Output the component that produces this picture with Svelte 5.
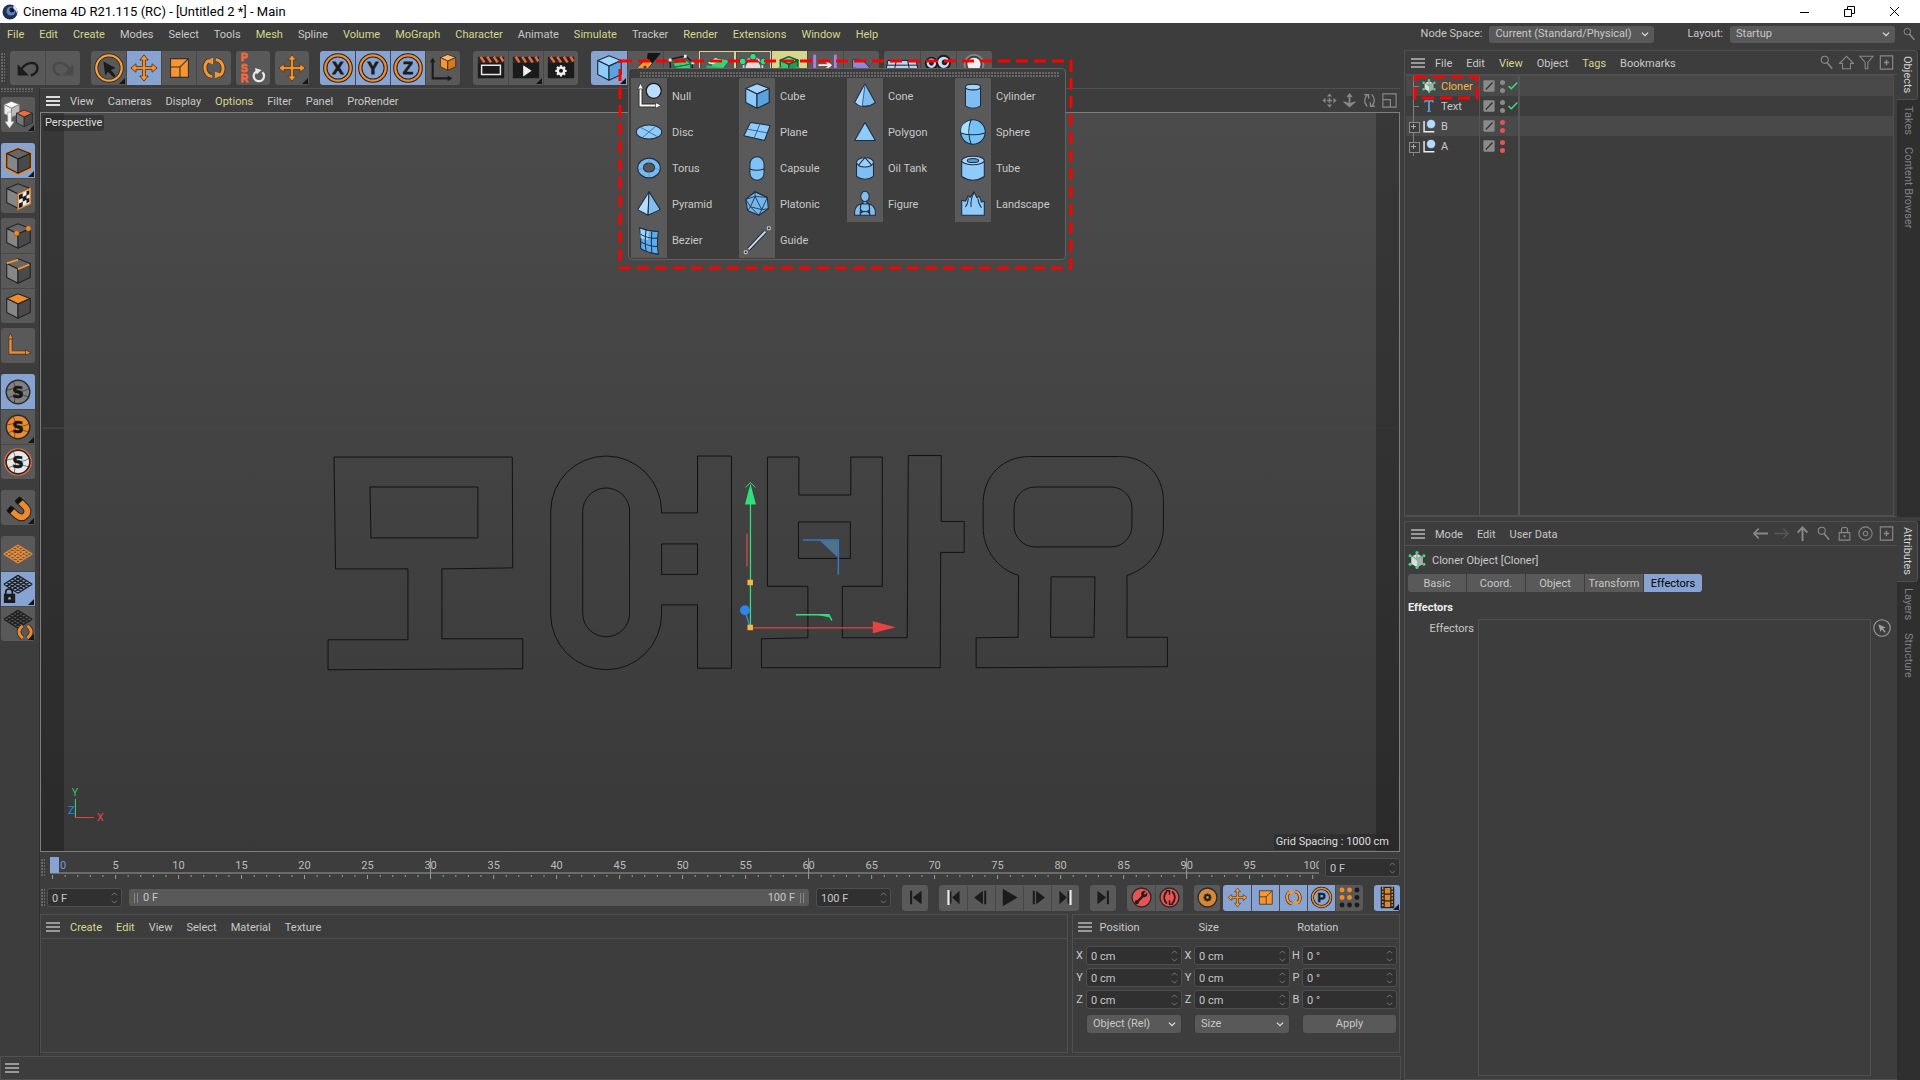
<script lang="ts">
  type MenuItem = { label: string; hot?: boolean };
  type Tool = {
    icon: string;
    label: string;
    active?: boolean;
    more?: boolean;
    tone?: string;
  };

  const menu = (text: string): MenuItem[] =>
    text.split(",").map((t) => ({ label: t.replace("*", ""), hot: t.startsWith("*") }));

  const mainMenu = menu(
    "*File,*Edit,*Create,Modes,Select,Tools,*Mesh,Spline,*Volume,*MoGraph,*Character,Animate,*Simulate,Tracker,*Render,*Extensions,*Window,*Help"
  );
  const viewMenu = menu("View,Cameras,Display,*Options,Filter,Panel,ProRender");
  const materialMenu = menu("*Create,*Edit,View,Select,Material,Texture");
  const objectMenu = menu("File,Edit,*View,Object,*Tags,Bookmarks");
  const attrMenu = menu("Mode,Edit,User Data");

  const tool = (icon: string, label: string, flags = ""): Tool => ({
    icon,
    label,
    active: flags.includes("a"),
    more: flags.includes("m"),
    tone: flags.includes("y") ? "yellow" : flags.includes("o") ? "outlined" : "",
  });

  const topTools: Tool[][] = [
    [tool("undo", "Undo"), tool("redo", "Redo")],
    [
      tool("select", "Live Selection", "m"),
      tool("move", "Move", "a"),
      tool("scale", "Scale"),
      tool("rotate", "Rotate"),
    ],
    [tool("psr", "Reset PSR")],
    [tool("move", "Last Tool", "m")],
    [
      tool("axisX", "X-Axis", "a"),
      tool("axisY", "Y-Axis", "a"),
      tool("axisZ", "Z-Axis", "a"),
      tool("coords", "Coordinate System"),
    ],
    [
      tool("clap", "Render View"),
      tool("clapPlay", "Render to Picture Viewer", "m"),
      tool("clapGear", "Render Settings"),
    ],
    [
      tool("cubeBlue", "Cube", "am"),
      tool("pen", "Pen"),
      tool("subdiv", "Subdivision Surface"),
      tool("extrude", "Extrude", "o"),
      tool("array", "Cloner", "o"),
      tool("volume", "Volume Builder", "y"),
      tool("field", "Field"),
      tool("bend", "Bend"),
    ],
    [tool("floor", "Floor"), tool("camera", "Camera"), tool("light", "Light")],
  ];

  const sideTools: Tool[][] = [
    [tool("convert", "Make Editable", "m")],
    [tool("model", "Model", "am"), tool("texture", "Texture")],
    [tool("points", "Points"), tool("edges", "Edges"), tool("polys", "Polygons")],
    [tool("axis", "Enable Axis")],
    [
      tool("soloOff", "Viewport Solo Off", "a"),
      tool("solo", "Viewport Solo Single", "m"),
      tool("soloAuto", "Viewport Solo Automatic"),
    ],
    [tool("magnet", "Enable Snap", "m")],
    [
      tool("plane", "Workplane"),
      tool("planeLock", "Locked Workplane", "am"),
      tool("planeSync", "Planar Workplane", "m"),
    ],
  ];

  const playTools: Tool[][] = [
    [tool("toStart", "Go to Start")],
    [
      tool("prevKey", "Go to Previous Key"),
      tool("prevFrame", "Go to Previous Frame"),
      tool("play", "Play Forwards"),
      tool("nextFrame", "Go to Next Frame"),
      tool("nextKey", "Go to Next Key"),
    ],
    [tool("toEnd", "Go to End")],
    [tool("record", "Record Active Objects"), tool("autokey", "Autokeying")],
    [tool("keyGear", "Keyframe Selection")],
    [
      tool("move", "Position", "a"),
      tool("scale", "Scale", "a"),
      tool("rotate", "Rotation", "a"),
      tool("param", "Parameter", "a"),
      tool("dots", "Point Level Animation"),
    ],
    [tool("film", "Film", "am")],
  ];

  const primitives = [
    ["Null", "Disc", "Torus", "Pyramid", "Bezier"],
    ["Cube", "Plane", "Capsule", "Platonic", "Guide"],
    ["Cone", "Polygon", "Oil Tank", "Figure"],
    ["Cylinder", "Sphere", "Tube", "Landscape"],
  ];

  const objects = [
    { name: "Cloner", icon: "cloner", on: true, selected: true, group: false },
    { name: "Text", icon: "textObj", on: true, selected: false, group: false },
    { name: "B", icon: "nullObj", on: false, selected: false, group: true },
    { name: "A", icon: "nullObj", on: false, selected: false, group: true },
  ];

  const coordRows = [
    ["X", "X", "H"],
    ["Y", "Y", "P"],
    ["Z", "Z", "B"],
  ];
  const coordValues = ["0 cm", "0 cm", "0 °"];
  const coordNames = ["Position", "Size", "Rotation"];

  const tabs = ["Basic", "Coord.", "Object", "Transform", "Effectors"];
  let activeTab = $state("Effectors");

  const frames = Array.from({ length: 101 }, (_, i) => i);
  const frameX = (f: number) => `${(0.2 + f * 0.993).toFixed(2)}%`;

  // icon drawing helpers, all on a 34 x 34 board
  const K = "#242424";
  const cube = (t: string, l: string, r: string, s = K, w = 1.2) =>
    `<g stroke="${s}" stroke-width="${w}" stroke-linejoin="round"><path d="M17 4 30 9 17 15 5 9Z" fill="${t}"/><path d="M5 9 17 15V30L5 24Z" fill="${l}"/><path d="M17 15 30 9V24L17 30Z" fill="${r}"/></g>`;
  const grayCube = cube("#666", "#868686", "#4a4a4a");
  const ring = (letter: string) =>
    `<circle cx="17" cy="17" r="13.5" fill="#87a3d1" stroke="#222" stroke-width="4.6"/><circle cx="17" cy="17" r="13.5" fill="none" stroke="#f08a2c" stroke-width="2.4"/><text x="17" y="23.4" text-anchor="middle" font-family="Liberation Sans, sans-serif" font-weight="bold" font-size="18" fill="#1b1b1b" stroke="#1b1b1b" stroke-width=".8">${letter}</text>`;
  const solo = (fill: string, edge: string) =>
    `<circle cx="17" cy="17" r="12.5" fill="${fill}" stroke="${edge}" stroke-width="1.6"/><path d="M5 15Q12 12 17 15T29 13M7 23Q17 18 28 22M12 6Q16 12 13 29" fill="none" stroke="#222" stroke-width=".6"/><text x="17" y="23" text-anchor="middle" font-family="DejaVu Sans, sans-serif" font-weight="bold" font-size="17" fill="#151515" stroke="#151515" stroke-width=".6">S</text>`;
  const mesh = (color: string, dy = 0) => {
    let d = "";
    for (let i = 0; i <= 5; i++) {
      d += `M${2 + i * 3} ${17 - i * 1.9 + dy}L${17 + i * 3} ${26.5 - i * 1.9 + dy}`;
      d += `M${2 + i * 3} ${17 + i * 1.9 + dy}L${17 + i * 3} ${7.5 + i * 1.9 + dy}`;
    }
    return `<path d="${d}" fill="none" stroke="${color}" stroke-width="1.4"/>`;
  };
  const clap = `<path d="M3 11h28v17H3Z" fill="#1b1b1b"/><path d="M3 5h28v6H3Z" fill="#262626"/><path d="M6 5l4 6M13 5l4 6M20 5l4 6M27 5l3 5" stroke="#f2683c" stroke-width="2.6"/>`;
  const gear = (x: number, y: number, c: string) => {
    let s = `<circle cx="${x}" cy="${y}" r="3.4" fill="none" stroke="${c}" stroke-width="2.6"/>`;
    for (let a = 0; a < 360; a += 45)
      s += `<path d="M${x - 1.2} ${y - 6}h2.4v3h-2.4Z" fill="${c}" transform="rotate(${a} ${x} ${y})"/>`;
    return s;
  };
  const movePath = "M17 3l4.500 5.500h-3v7h7v-3L31 17l-5.500 4.500v-3h-7v7h3L17 31l-4.500-5.500h3v-7h-7v3L3 17l5.500-4.500v3h7v-7h-3Z";
  const gb = 'stroke="#1e2d3c" stroke-width="1.1" stroke-linejoin="round"';

  const icons: Record<string, string> = {
    undo: `<path d="M9 21C12 11 27 8 27 17q0 6-7 8" fill="none" stroke="#1c1c1c" stroke-width="2.6"/><path d="M6 13v12h12Z" fill="#1c1c1c"/>`,
    redo: `<path d="M25 21C22 11 7 8 7 17q0 6 7 8" fill="none" stroke="#4a4a4a" stroke-width="2.6"/><path d="M28 13v12H16Z" fill="#4a4a4a"/>`,
    select: `<circle cx="17" cy="17" r="13.5" fill="none" stroke="#222" stroke-width="4"/><circle cx="17" cy="17" r="13.5" fill="none" stroke="#f7a03c" stroke-width="2.4"/><path d="M11 10l13 7-5 2 5 6-2 2-6-6-3 4Z" fill="#1b1b1b"/>`,
    move: `<path d="${movePath}" fill="#f7952f" stroke="#5b3a1a" stroke-width="1"/>`,
    scale: `<path d="M8 7h19v20H8Z" fill="#f7952f" stroke="#333" stroke-width="1.2"/><path d="M8 16h10v11M18 16l9-9" fill="none" stroke="#333" stroke-width="1.2"/>`,
    rotate: `<g fill="none" stroke="#333" stroke-width="5"><path d="M15 26A9 9.500 0 0 1 11 9M19 8a9 9.500 0 0 1 4 17"/></g><g fill="none" stroke="#f7952f" stroke-width="3.2"><path d="M15 26A9 9.500 0 0 1 11 9M19 8a9 9.500 0 0 1 4 17"/></g><path d="M7 10l9-4v7ZM27 24l-9 4v-7Z" fill="#f7952f"/>`,
    psr: `<g font-family="Liberation Sans, sans-serif" font-weight="bold" font-size="11" fill="#f2683c" stroke="#f2683c" stroke-width=".8"><text x="4" y="10">P</text><text x="4" y="21">S</text><text x="4" y="32">R</text></g><path d="M21 20.500a5.500 5.500 0 1 0 6 1" fill="none" stroke="#e8e8e8" stroke-width="2.4"/><path d="M19 17l7 2-5 5Z" fill="#e8e8e8"/>`,
    axisX: ring("X"),
    axisY: ring("Y"),
    axisZ: ring("Z"),
    coords: `<path d="M6 10v18h17" fill="none" stroke="#1b1b1b" stroke-width="2.200"/><path d="M6 6l3 5H3ZM27 28l-5 3v-6Z" fill="#1b1b1b"/><g transform="translate(11 0) scale(.65)">${cube("#ffb45e", "#f7952f", "#d9781c")}</g>`,
    clap: clap + `<path d="M7 14h20v10H7Z" fill="none" stroke="#e8e8e8" stroke-width="1.600"/>`,
    clapPlay: clap + `<path d="M14 14l9 6-9 6Z" fill="#f0f0f0"/>`,
    clapGear: clap + gear(17, 20, "#f0f0f0"),
    cubeBlue: cube("#a5d4ff", "#8ecbfb", "#5aa3e0", "#1e2d3c"),
    pen: `<path d="M20 1h14l-9 11-6-5Z" fill="#151515"/><path d="M9 16l10-9 6 5-12 14-7 4Z" fill="#f7952f" stroke="#333"/><path d="M8 27l8-9" stroke="#333"/><circle cx="17" cy="16" r="1.500" fill="#333"/>`,
    subdiv: `<path d="M5 8l17-4 7 7v14l-22 4Z" fill="none" stroke="#1b1b1b" stroke-width="1.5"/><path d="M8 12l15-3 4 4-16 3ZM11 16l16-3v12l-14 4Z" fill="#35d079" stroke="#173"/><path d="M4 7h3v3H4ZM20 3h3v3h-3ZM28 10h3v3h-3Z" fill="#eee"/>`,
    extrude: `<path d="M6 12l9-6 14 3-5 8Z" fill="#e9fff2" stroke="#173"/><path d="M12 13l12-5 5 2-6 7-13 2Z" fill="#35d079"/><path d="M6 14l17 3v13L6 26Z" fill="#2bb568"/>`,
    array: `<circle cx="17" cy="17" r="8" fill="#ddd"/><path d="M17 5l-10 6v12l10 6 10-6V11Z" fill="none" stroke="#ccc" stroke-width="2"/><g fill="#3ddc84" stroke="#154"><circle cx="17" cy="5" r="3.500"/><circle cx="6" cy="10" r="3.500"/><circle cx="28" cy="10" r="3.500"/><circle cx="6" cy="23" r="3.500"/><circle cx="28" cy="23" r="3.500"/></g>`,
    volume: `<g transform="translate(4 2) scale(.75)">${cube("#5fe89b", "#35c973", "#219b54", "#0d5a2d", 2)}</g><path d="M5 17l5-2v12l-5-3ZM29 17l-5-2v12l5-3Z" fill="#2bb568"/>`,
    field: `<path d="M6 3v28M28 3v28" stroke="#b77be6" stroke-width="3"/><path d="M10 14h12M18 10l5 4-5 4" fill="none" stroke="#eee" stroke-width="2"/>`,
    bend: `<path d="M8 8q12-3 20 12l-4 9q-8-13-16-12Z" fill="#8f88d8" stroke="#333"/>`,
    floor: `<path d="M2 9h30l3 15H-1Z" fill="#b8d4f6" stroke="#1b1b1b"/><path d="M11 9L8 24M23 9l3 15M1 14h32" stroke="#1b1b1b" fill="none"/>`,
    camera: `<circle cx="10" cy="12" r="6" fill="#c8e0fa" stroke="#1b1b1b" stroke-width="2"/><circle cx="23" cy="11" r="7" fill="#c8e0fa" stroke="#1b1b1b" stroke-width="2"/><circle cx="10" cy="12" r="2.500" fill="#222"/><circle cx="24" cy="11" r="3" fill="#222"/>`,
    light: `<circle cx="17" cy="13" r="11" fill="#888"/><circle cx="17" cy="13" r="8" fill="#eee" stroke="#444" stroke-width="2"/>`,
    convert: `<g transform="translate(-1 0) scale(.65)">${cube("#fff", "#eee", "#bbb", "#777")}</g><g transform="translate(12 9) scale(.68)">${cube("#f2683c", "#777", "#484848")}</g><path d="M6 14h4v10h3l-5 7-5-7h3Z" fill="#f4f4f4" stroke="#888" stroke-width=".5"/>`,
    model: `<path d="M17 3.500 30.500 9v16L17 31 4 25V9Z" fill="none" stroke="#f08a2c" stroke-width="2.600"/>` + grayCube,
    texture: `${grayCube}<path d="M17 15l13-6v16l-13 6Z" fill="#eee" stroke="#f08a2c" stroke-width="1.400"/><path d="M18 16l4-2v5l-4 2ZM26 12l3-1v4l-3 2ZM22 18l4-2v5l-4 2ZM18 25l4-2v5l-4 2ZM26 20l3-1v4l-3 2Z" fill="#1b1b1b"/>`,
    points: `${grayCube}<g fill="#f08a2c" stroke="#8a4a10" stroke-width=".6"><circle cx="15.500" cy="14" r="2.800"/><circle cx="28" cy="9" r="2.800"/></g>`,
    edges: `${grayCube}<path d="M5 9l12-4M17 15l12-5" stroke="#f7952f" stroke-width="2"/>`,
    polys: cube("#f08a2c", "#868686", "#4a4a4a"),
    axis: `<path d="M9 8v16h17" fill="none" stroke="#333" stroke-width="4"/><path d="M9 8v16h17" fill="none" stroke="#f08a2c" stroke-width="2.600"/><path d="M9 3.500l2.600 6H6.400ZM31 24l-6 2.800v-5.600Z" fill="#f08a2c" stroke="#333" stroke-width=".8"/>`,
    soloOff: solo("#808080", "#2a2a2a"),
    solo: solo("#f08a2c", "#2a2a2a"),
    soloAuto: `<circle cx="17" cy="17" r="14" fill="#2a2a2a" stroke="#f2683c" stroke-width="1.400"/>` + solo("#e8e8e8", "#2a2a2a"),
    magnet: `<g fill="none"><path d="M8 18l8 7q5 4 9 0t0-9l-8-8" stroke="#222" stroke-width="8"/><path d="M8 18l8 7q5 4 9 0t0-9l-8-8" stroke="#f08a2c" stroke-width="6"/><path d="M7 17l4 3.500M16 7l3.500 4" stroke="#111" stroke-width="7"/></g>`,
    plane: mesh("#f08a2c"),
    planeLock: mesh("#1e1e1e", -5) + `<path d="M4 23v-3q0-3 3.500-3t3.500 3v3" fill="none" stroke="#1b1b1b" stroke-width="1.800"/><path d="M2 22h12v10H2Z" fill="#1b1b1b"/><circle cx="8" cy="27" r="1.400" fill="#87a3d1"/>`,
    planeSync: mesh("#1e1e1e", -5) + `<path d="M22 19q-8 6 0 13M27 19q8 6 0 13" fill="none" stroke="#333" stroke-width="5"/><path d="M22 19q-8 6 0 13M27 19q8 6 0 13" fill="none" stroke="#f08a2c" stroke-width="3"/>`,
    toStart: `<path d="M9 7h3v20H9ZM26 7v20L13 17Z" fill="#1b1b1b"/>`,
    toEnd: `<path d="M22 7h3v20h-3ZM8 7v20l13-10Z" fill="#1b1b1b"/>`,
    prevKey: `<path d="M8 6h3v22H8Z" fill="#eee"/><path d="M12 8h2v18h-2ZM26 7v20L15 17Z" fill="#1b1b1b"/>`,
    nextKey: `<path d="M23 6h3v22h-3Z" fill="#eee"/><path d="M20 8h2v18h-2ZM8 7v20l11-10Z" fill="#1b1b1b"/>`,
    prevFrame: `<path d="M19 7v20L6 17ZM21 7h3v20h-3Z" fill="#1b1b1b"/>`,
    nextFrame: `<path d="M15 7v20l13-10ZM10 7h3v20h-3Z" fill="#1b1b1b"/>`,
    play: `<path d="M7 4v26l22-13Z" fill="#1b1b1b"/>`,
    record: `<circle cx="17" cy="17" r="14" fill="#e85252" stroke="#2a2a2a" stroke-width="2"/><path d="M10 24l10-10" stroke="#1b1b1b" stroke-width="3.500"/><circle cx="21" cy="12" r="4.500" fill="#1b1b1b"/><circle cx="10" cy="24" r="3" fill="#1b1b1b"/><path d="M21 12l5-5" stroke="#e85252" stroke-width="2.500"/>`,
    autokey: `<circle cx="17" cy="17" r="14" fill="#e85252" stroke="#2a2a2a" stroke-width="2"/><path d="M13 8q-8 9 0 18M21 8q8 9 0 18" fill="none" stroke="#1b1b1b" stroke-width="2.600"/><path d="M12 7h5v6M22 27h-5v-6" fill="none" stroke="#1b1b1b" stroke-width="2"/>`,
    keyGear: `<circle cx="17" cy="17" r="14" fill="#d5873a" stroke="#2a2a2a" stroke-width="2"/>` + gear(17, 17, "#1b1b1b"),
    param: ring("P"),
    dots: [6, 17, 28]
      .map((y, r) => [6, 17, 28].map((x, c) => `<circle cx="${x}" cy="${y}" r="3.600" fill="${r < 2 && c < 2 ? "#f08a2c" : "#1b1b1b"}"/>`).join(""))
      .join(""),
    film: `<path d="M7 1h20v32H7Z" fill="#222"/><path d="M13 3h8v8h-8ZM13 13h8v8h-8ZM13 23h8v8h-8Z" fill="#d5873a"/><path d="M10 2v30M24 2v30" stroke="#d5873a" stroke-width="2.400" stroke-dasharray="3 2"/>`,

    Null: `<g fill="none" stroke="#222" stroke-width="4"><path d="M8 8v19h17"/></g><path d="M8 8v19h17" fill="none" stroke="#fff" stroke-width="2.200"/><path d="M8 3.500l3 6H5ZM30 27l-6 3v-6Z" fill="#fff" stroke="#222" stroke-width=".7"/><circle cx="22" cy="11.500" r="8" fill="#b9dcff" stroke="#1b1b1b" stroke-width="1.300"/>`,
    Disc: `<ellipse cx="17" cy="17" rx="13.500" ry="7.500" fill="#8ecbfb" ${gb}/><path d="M8 12l18 10M24 11l-14 12" stroke="#3a6f9c" fill="none"/>`,
    Torus: `<ellipse cx="17" cy="17" rx="12" ry="10.500" fill="#78b9f2" ${gb}/><ellipse cx="17" cy="16.500" rx="6" ry="4.800" fill="#555" ${gb}/><path d="M17 7v5M6 19l5-2M28 19l-5-2M17 27v-6" stroke="#5c98cf"/>`,
    Pyramid: `<path d="M17 4L5 23l11 6Z" fill="#b5dbff" ${gb}/><path d="M17 4l-1 25 13-6Z" fill="#80bdf0" ${gb}/>`,
    Bezier: `<path d="M7 4q10 4 20 4-2 12 0 24-11-1-19-6Q9 14 7 4Z" fill="#5aaef0" ${gb}/><path d="M8 5q5 2 9 3l-1 9q-4 0-8-2Z" fill="#9cd4ff"/><path d="M8 11q10 5 18 4M8 19q9 5 18 5M14 6q-2 12 0 23M20 8q-1 11 0 23" fill="none" ${gb}/>`,
    Cube: cube("#a5d4ff", "#8ecbfb", "#5aa3e0", "#1e2d3c"),
    Plane: `<path d="M10 7l21 3-6 16-22-5Z" fill="#8ecbfb" ${gb}/><path d="M20 8.500l-6 15M7 14l21 4" stroke="#2f5f8c"/>`,
    Capsule: `<rect x="9.500" y="5" width="15" height="25" rx="7.500" fill="#80c2f8" ${gb}/><path d="M9.500 18q7 3 15 0" fill="none" ${gb}/>`,
    Platonic: `<path d="M15 4l13 6 1 12-10 7-12-5-2-12Z" fill="#74b6ee" ${gb}/><path d="M15 4L5 12l5 8 12 3 6-13ZM15 9L10 20M15 9l13 1M15 9l7 14M15 4v5L5 12M10 20l-3 4M10 20l9 9 3-6 7-1" fill="none" stroke="#1e2d3c" stroke-width=".9"/>`,
    Guide: `<path d="M8 27L26 8" stroke="#222" stroke-width="4"/><path d="M8 27L26 8" stroke="#b9dcff" stroke-width="2.200"/><path d="M3.500 28.500h3v3h-3ZM28 3h3v3h-3Z" fill="#222" stroke="#ddd"/>`,
    Cone: `<path d="M17 4L6 24q11 8 22 0Z" fill="#80bdf0" ${gb}/><path d="M17 5L14 28Q10 27 7 24Z" fill="#a9d7ff"/><path d="M17 5l-3 23" stroke="#2f5f8c"/>`,
    Polygon: `<path d="M17 7l11 19H6Z" fill="#8ecbfb" ${gb}/>`,
    "Oil Tank": `<path d="M8 11v15q9 6 18 0V11l-9-6Z" fill="#80bdf0" stroke="none"/><path d="M8 12v14q9 6 18 0V12" fill="none" ${gb}/><ellipse cx="17" cy="11" rx="9" ry="5" fill="#9ad0fb" ${gb}/><path d="M17 6l-7 8M17 6l7 8" fill="none" ${gb}/>`,
    Figure: `<g fill="#80bdf0" ${gb}><path d="M13 17q-6 1-7 8v4h6v-4ZM21 17q6 1 7 8v4h-6v-4Z"/><path d="M13 17q4-2 8 0l1 5q-1 3-3 3h-4q-2 0-3-3Z"/><path d="M12 29q0-4 5-4t5 4Z"/><path d="M15 13h4v4h-4Z"/><ellipse cx="17" cy="9" rx="4.500" ry="5.500"/></g>`,
    Cylinder: `<path d="M9 7.500v20q8 5 16 0v-20" fill="#80bdf0" ${gb}/><ellipse cx="17" cy="7.500" rx="8" ry="3" fill="#a5d4ff" ${gb}/>`,
    Sphere: `<circle cx="17" cy="17" r="13" fill="#74c2f8" ${gb}/><path d="M14 5q-12 3-9 14h9Z" fill="#a5e2ff"/><path d="M15 4q-5 12 0 26M4 18q12 4 26 0" fill="none" ${gb}/>`,
    Tube: `<path d="M5 9v17q12 8 24 0V9" fill="#8ecbfb" ${gb}/><ellipse cx="17" cy="9" rx="12" ry="4.500" fill="#a5d4ff" ${gb}/><ellipse cx="17" cy="9" rx="6" ry="2.200" fill="#5c9bd2" ${gb}/>`,
    Landscape: `<path d="M5 29V13l4 1 3-6 2 2 4-6 3 6 3-1 2 6 3-1v15Z" fill="#8ecbfb" ${gb}/><path d="M12 10q0 6-3 10M18 5q-4 7-3 15M22 11q1 6 4 10" fill="none" ${gb}/>`,

    cloner: `<path d="M17 5l11 6v13l-11 7-11-7V11Z" fill="#ddd"/><path d="M17 16l11-6v14l-11 7Z" fill="#aaa"/><path d="M17 3v12l12-7M5 8l12 8M5 8v17l12 7M29 8v17" stroke="#333" stroke-width="1" fill="none"/><g fill="#3ddc84"><circle cx="17" cy="3" r="3"/><circle cx="4" cy="9" r="3"/><circle cx="30" cy="9" r="3"/><circle cx="17" cy="15" r="3"/><circle cx="4" cy="25" r="3"/><circle cx="30" cy="25" r="3"/><circle cx="17" cy="31" r="3"/></g>`,
    textObj: `<path d="M6 3h22v6h-2q0-3-4-3h-3v22q0 2 3 2v1H12v-1q3 0 3-2V6h-3q-4 0-4 3H6Z" fill="#6aa6e0"/>`,
    nullObj: `<path d="M5 5v26h25" fill="none" stroke="#eee" stroke-width="3.500"/><circle cx="22" cy="12" r="11" fill="#b4daff" stroke="#222"/>`,
    search: `<circle cx="13" cy="11" r="8" fill="none" stroke="currentColor" stroke-width="2.400"/><path d="M18 17l12 14" stroke="currentColor" stroke-width="3.500"/>`,
    home: `<path d="M17 3L1 19h7v12h18V19h7Z" fill="none" stroke="currentColor" stroke-width="2.400"/>`,
    filter: `<path d="M2 3h30L20 17v14h-6V17Z" fill="none" stroke="currentColor" stroke-width="2.400"/>`,
    plus: `<path d="M3 2h28v30H3Z" fill="none" stroke="currentColor" stroke-width="2.600"/><path d="M17 11v12M11 17h12" stroke="currentColor" stroke-width="3.500"/>`,
    back: `<path d="M34 17H3M13 6L2 17l11 11" fill="none" stroke="currentColor" stroke-width="4"/>`,
    forward: `<path d="M0 17h30M21 6l11 11-11 11" fill="none" stroke="currentColor" stroke-width="3"/>`,
    up: `<path d="M17 34V4M6 15L17 3l11 12" fill="none" stroke="currentColor" stroke-width="4.400"/>`,
    lock: `<path d="M5 15h24v17H5ZM10 15v-6q0-6 7-6t7 6v6" fill="none" stroke="currentColor" stroke-width="2.400"/><circle cx="17" cy="23" r="2.500" fill="currentColor"/>`,
    target: `<circle cx="17" cy="17" r="15" fill="none" stroke="currentColor" stroke-width="2.400"/><circle cx="17" cy="17" r="5" fill="none" stroke="currentColor" stroke-width="2.400"/>`,
    pick: `<circle cx="17" cy="17" r="15.5" fill="none" stroke="currentColor" stroke-width="2"/><path d="M10 10l14 6-5 2 5 6-2 2-5-6-3 4Z" fill="currentColor"/>`,
    pan: `<path d="M17 1l6 7H11ZM17 33l-6-7h12ZM1 17l7-6v12ZM33 17l-7 6V11Z" fill="currentColor"/><path d="M17 11v12M11 17h12" stroke="currentColor" stroke-width="3"/>`,
    dolly: `<path d="M17 0l7 9h-5v13h-4V9h-5Z" fill="currentColor"/><path d="M2 20l15 13 15-13-3-1-9 3h-6l-9-3Z" fill="currentColor"/>`,
    orbit: `<path d="M12 31Q0 17 12 4M22 3q12 14 0 27" fill="none" stroke="currentColor" stroke-width="3"/><path d="M5 4h10v9M29 30H19v-9" fill="none" stroke="currentColor" stroke-width="3"/>`,
    maximize: `<path d="M2 2h30v30H2ZM2 15h17v17M2 15" fill="none" stroke="currentColor" stroke-width="2.600"/>`,
    chevron: `<path d="M4 11l13 13 13-13" fill="none" stroke="currentColor" stroke-width="5.500"/>`,
    check: `<path d="M2 17l9 9L32 5" fill="none" stroke="#3ddc84" stroke-width="5"/>`,
    layer: `<rect x="1" y="1" width="32" height="32" rx="3" fill="#8a8a8a"/><path d="M8 27L27 7" stroke="#303030" stroke-width="3.500"/>`,
  };
</script>

{#snippet icon(name: string, kind = "")}
  <svg class="icon {kind}" viewBox="0 0 34 34" aria-hidden="true">{@html icons[name]}</svg>
{/snippet}

{#snippet menuItems(items: MenuItem[])}
  {#each items as item}
    <button class="menu-item" class:hot={item.hot}>{item.label}</button>
  {/each}
{/snippet}

{#snippet burger()}
  <button class="burger" aria-label="Panel menu"><i></i><i></i><i></i></button>
{/snippet}

{#snippet toolGroup(group: Tool[])}
  <div class="group">
    {#each group as t}
      <button class="tool {t.tone}" class:active={t.active} class:more={t.more} aria-label={t.label}>
        {@render icon(t.icon)}
      </button>
    {/each}
  </div>
{/snippet}

{#snippet field(value: string, label: string)}
  <div class="field">
    <input type="text" {value} aria-label={label} />
    <svg class="spin" viewBox="0 0 8 14" aria-hidden="true">
      <path d="M1 4l3-3 3 3M1 10l3 3 3-3" />
    </svg>
  </div>
{/snippet}

{#snippet dropdown(value: string, label: string)}
  <div class="dropdown">
    <select aria-label={label}><option>{value}</option></select>
    {@render icon("chevron", "chev")}
  </div>
{/snippet}

<div class="app">
  <header class="title">
    <svg class="logo" viewBox="0 0 16 16" aria-hidden="true">
      <circle cx="8" cy="8" r="7.500" fill="#20304f" />
      <circle cx="9" cy="7" r="4.500" fill="#5f83c9" />
      <circle cx="10" cy="6" r="2.500" fill="#14182b" />
      <path d="M12 1q4 3 3 9-1-4-4-6Z" fill="#dfe7f5" />
    </svg>
    <h1>Cinema 4D R21.115 (RC) - [Untitled 2 *] - Main</h1>
    <div class="window-buttons">
      <button aria-label="Minimize"><svg viewBox="0 0 11 11"><path d="M1 6.500h9" /></svg></button>
      <button aria-label="Restore"><svg viewBox="0 0 11 11"><path d="M.5 3.500h7v7h-7ZM3.500 3.500v-3h7v7h-3" /></svg></button>
      <button aria-label="Close"><svg viewBox="0 0 11 11"><path d="M1 1l9 9M10 1l-9 9" /></svg></button>
    </div>
  </header>

  <nav class="menubar">
    {@render menuItems(mainMenu)}
    <div class="layouts">
      <span>Node Space:</span>
      {@render dropdown("Current (Standard/Physical)", "Node Space")}
      <span class="layout-label">Layout:</span>
      {@render dropdown("Startup", "Layout")}
      {@render icon("search", "small")}
    </div>
  </nav>

  <div class="body">
    <main>
      <div class="toolbar">
        <div class="grip tall"></div>
        {#each topTools as group}
          {@render toolGroup(group)}
        {/each}

        <div class="popup">
          <div class="grip wide"></div>
          <div class="primitives">
            {#each primitives as column}
              <div class="prim-col">
                {#each column as name}
                  <button class="prim">
                    <span class="prim-icon">{@render icon(name)}</span>
                    <span class="caption">{name}</span>
                  </button>
                {/each}
              </div>
            {/each}
          </div>
        </div>
        <svg class="marker popup-marker" aria-hidden="true"><rect x="2" y="2" width="451" height="207" /></svg>
      </div>

      <div class="work">
        <div class="sidebar">
          <div class="grip wide"></div>
          {#each sideTools as group}
            {@render toolGroup(group)}
          {/each}
        </div>

        <div class="center">
          <div class="panel-head view-head">
            {@render burger()}
            {@render menuItems(viewMenu)}
            <div class="head-icons">
              {@render icon("pan")}
              {@render icon("dolly")}
              {@render icon("orbit")}
              {@render icon("maximize")}
            </div>
          </div>
          <div class="viewport">
            <svg class="scene" viewBox="41 113 1358 739" preserveAspectRatio="xMidYMid meet" aria-label="Perspective view">
              <path class="horizon" d="M41 428.500H1399" />
              <g class="outline">
                <path d="M333.500 457.500H512L512.500 568.500 441.500 569.500V639.500H522.500V669.500L327.500 670.500V640.500H407.500V569.500H335Z" />
                <path d="M369.500 487.500H477.500V538.500H370.500Z" />
                <path d="M661.500 513.500H697.500V456.500H731.500V669H697.500V605.500H661.500V615A55.500 55.500 0 0 1 550.500 615V512A55.500 55.500 0 0 1 661.500 512Z" />
                <rect x="582.500" y="488.500" width="47" height="149" rx="23.500" />
                <path d="M661.500 544.500H697.500V575H661.500Z" />
                <path d="M767.500 457.500H799V495.500H851V457.500H882.500V587H842.500V638.500H907.500L908.500 456H941.500V522H964.500V553H941L940.500 668.500H761.500V639.500L808 638.500V587H767.500Z" />
                <path d="M798.500 522.500H850.500V559H798.500Z" />
                <path d="M1019 576C998 570 983.500 550 983.500 528V502C984.500 476 1003 457 1030 457H1120C1147 457 1164 476 1164 502V528C1164 550 1148 570 1127.500 576V638H1168V667.500L976.500 668.500V638.500L1018.500 638Z" />
                <rect x="1014.500" y="487.500" width="118" height="60" rx="21" />
                <path d="M1051.500 577.500H1095.500L1094.500 638H1051Z" />
              </g>
              <path d="M747 534V567" stroke="#c74545" stroke-width="1.500" />
              <path d="M745 611L750 628" stroke="#3f7fd0" stroke-width="1.500" />
              <path d="M803 540.500H838.500V575.500M821 541L838 557" fill="none" stroke="#3577c8" stroke-width="1.500" />
              <path d="M822 541H838V557Z" fill="#517388" />
              <path d="M750.500 628V490" stroke="#2ee07a" stroke-width="1.300" />
              <path d="M750.500 484L756 505H745Z" fill="#2ee07a" />
              <path d="M745.500 488L750.500 483 755.500 488" fill="none" stroke="#2ee07a" />
              <path d="M796 615.500H829L832 621" fill="none" stroke="#2ee07a" stroke-width="1.500" />
              <path d="M814 615L829 618V615Z" fill="#2ee07a" />
              <path d="M750 628.500H874" stroke="#e64444" stroke-width="1.300" />
              <path d="M873 622L896 628 873 634Z" fill="#e64444" />
              <circle cx="745" cy="611" r="5" fill="#2e85e6" />
              <path d="M747.500 580.500H753V586H747.500ZM747.500 625.500H753V631H747.500Z" fill="#f5b83d" />
              <path d="M74.500 800V818" stroke="#3ddc84" />
              <path d="M74 818.500H93" stroke="#e64444" />
              <g class="axis-names">
                <text x="71" y="797" fill="#34c070">Y</text>
                <text x="67" y="815" fill="#2e85e6">Z</text>
                <text x="96" y="822" fill="#e64444">X</text>
              </g>
            </svg>
            <span class="view-name">Perspective</span>
            <span class="grid-info">Grid Spacing : 1000 cm</span>
          </div>

          <div class="timeline">
            <div class="grip tall"></div>
            <svg class="ruler" aria-hidden="true">
              <rect class="head" y="3" width="9" height="16" />
              {#each frames as f}
                <line x1={frameX(f)} x2={frameX(f)} y1={f % 30 === 0 && f ? 4 : 21} y2={f % 5 === 0 ? 25 : 23} />
                {#if f % 5 === 0 && f}
                  <text x={frameX(f)} y="15">{f}</text>
                {/if}
              {/each}
              <text class="zero" x="13" y="15">0</text>
              <line x1="0" x2="100%" y1="19" y2="19" />
            </svg>
            {@render field("0 F", "Current frame")}
          </div>

          <div class="playback">
            <div class="grip tall"></div>
            {@render field("0 F", "First frame")}
            <div class="range"><b></b><span>0 F</span><span class="range-end">100 F</span><b></b></div>
            {@render field("100 F", "Last frame")}
            <div class="play-tools">
              {#each playTools as group}
                {@render toolGroup(group)}
              {/each}
            </div>
          </div>

          <div class="bottom">
            <section class="materials">
              <div class="panel-head">
                {@render burger()}
                {@render menuItems(materialMenu)}
              </div>
            </section>
            <section class="coordinates">
              <div class="panel-head coord-head">
                {@render burger()}
                <span>Position</span>
                <span>Size</span>
                <span>Rotation</span>
              </div>
              <div class="coord-grid">
                {#each coordRows as row}
                  {#each row as axis, i}
                    <span>{axis}</span>
                    {@render field(coordValues[i], `${coordNames[i]} ${axis}`)}
                  {/each}
                {/each}
                <span></span>
                {@render dropdown("Object (Rel)", "Coordinate mode")}
                <span></span>
                {@render dropdown("Size", "Size mode")}
                <span></span>
                <button class="apply">Apply</button>
              </div>
            </section>
          </div>
        </div>
      </div>

      <footer class="status">{@render burger()}</footer>
    </main>

    <aside class="dock">
      <div class="dock-row">
        <section class="dock-panel">
          <div class="panel-head">
            {@render burger()}
            {@render menuItems(objectMenu)}
            <div class="head-icons">
              {@render icon("search")}
              {@render icon("home")}
              {@render icon("filter")}
              {@render icon("plus")}
            </div>
          </div>
          <div class="tree">
            {#each objects as o}
              <div class="tree-row">
                <div class="tree-name" class:selected={o.selected}>
                  <span class="branch" class:group-node={o.group}></span>
                  {@render icon(o.icon)}
                  <span class="caption">{o.name}</span>
                  {#if o.selected}
                    <svg class="marker name-marker" aria-hidden="true"><rect x="2" y="2" width="62" height="21" /></svg>
                  {/if}
                </div>
                <div class="tree-state">
                  {@render icon("layer", "layer")}
                  <span class="dots" class:off={!o.on}><i></i><i></i></span>
                  {#if o.on}{@render icon("check")}{/if}
                </div>
                <div class="tree-tags"></div>
              </div>
            {/each}
            <div class="tree-row rest">
              <div class="tree-name"></div>
              <div class="tree-state"></div>
              <div class="tree-tags"></div>
            </div>
          </div>
        </section>
        <div class="side-tabs">
          <button class="current">Objects</button>
          <button>Takes</button>
          <button>Content Browser</button>
        </div>
      </div>

      <div class="dock-row">
        <section class="dock-panel">
          <div class="panel-head attr-head">
            {@render burger()}
            {@render menuItems(attrMenu)}
            <div class="head-icons">
              {@render icon("back")}
              {@render icon("forward", "faint")}
              {@render icon("up")}
              {@render icon("search")}
              {@render icon("lock")}
              {@render icon("target")}
              {@render icon("plus")}
            </div>
          </div>
          <div class="attrs">
            <div class="attr-title">
              {@render icon("cloner")}
              <span class="caption">Cloner Object [Cloner]</span>
            </div>
            <div class="tabs">
              {#each tabs as tab}
                <button class:active={activeTab === tab} onclick={() => (activeTab = tab)}>{tab}</button>
              {/each}
            </div>
            <h2>{activeTab}</h2>
            <div class="effectors">
              <label for="effectors">Effectors</label>
              <textarea id="effectors"></textarea>
              <button class="pick" aria-label="Pick object">{@render icon("pick")}</button>
            </div>
          </div>
        </section>
        <div class="side-tabs">
          <button class="current">Attributes</button>
          <button>Layers</button>
          <button>Structure</button>
        </div>
      </div>
    </aside>
  </div>
</div>

<style>
  :global(body) {
    margin: 0;
    background: #3d3d3d;
  }

  .app {
    display: flex;
    flex-direction: column;
    height: 100vh;
    overflow: hidden;
    background: #3d3d3d;
    color: #c8c8c8;
    font-family: Roboto, "Noto Sans", sans-serif;
    font-size: 11px;
    line-height: 16px;
  }

  .app :global(*) {
    box-sizing: border-box;
  }

  button,
  input,
  select,
  textarea {
    font: inherit;
    color: inherit;
    margin: 0;
    padding: 0;
    border: 0;
    border-radius: 0;
    background: none;
    outline: none;
    appearance: none;
  }

  .icon {
    display: block;
    flex: none;
  }

  .caption,
  .menu-item {
    flex: none;
    padding-top: 2px;
  }

  /* title and menus */
  .title {
    display: flex;
    align-items: center;
    flex: none;
    height: 23px;
    padding-left: 2px;
    background: #fff;
    color: #000;
  }

  .title h1 {
    margin: 0 0 0 5px;
    font-size: 13px;
    font-weight: 400;
  }

  .logo {
    width: 16px;
    height: 16px;
  }

  .window-buttons {
    display: flex;
    margin-left: auto;
    padding-right: 3px;
  }

  .window-buttons button {
    width: 45px;
    height: 20px;
  }

  .window-buttons svg {
    display: block;
    width: 11px;
    height: 11px;
    margin: auto;
    fill: none;
    stroke: #000;
  }

  .menubar {
    display: flex;
    align-items: center;
    flex: none;
    gap: 15px;
    height: 27px;
    padding: 0 4px 5px 7px;
  }

  .hot {
    color: #d6d78c;
  }

  .layouts {
    display: flex;
    align-items: center;
    gap: 7px;
    margin-left: auto;
  }

  .layout-label {
    margin-left: 26px;
  }

  .layouts .dropdown {
    width: 165px;
  }

  .small {
    width: 14px;
    height: 14px;
    color: #8a8a8a;
  }

  .dropdown {
    display: flex;
    align-items: center;
    height: 17px;
    padding-right: 5px;
    border-radius: 3px;
    background: #595959;
  }

  .dropdown select {
    flex: 1;
    min-width: 0;
    height: 17px;
    padding-left: 6px;
    line-height: 16px;
  }

  .chev {
    width: 8px;
    height: 8px;
    color: #ddd;
  }

  .body {
    display: flex;
    flex: 1;
    min-height: 0;
  }

  main {
    display: flex;
    flex: 1;
    flex-direction: column;
    min-width: 0;
  }

  /* tool buttons */
  .toolbar {
    position: relative;
    display: flex;
    gap: 5px;
    flex: none;
    height: 38px;
    padding: 1px 0 0 1px;
  }

  .grip {
    flex: none;
    background-image: radial-gradient(circle at 1px 1px, #666 1px, transparent 1px);
    background-size: 3px 3px;
  }

  .grip.tall {
    width: 4px;
    height: 30px;
    margin-top: 2px;
  }

  .grip.wide {
    height: 5px;
  }

  .group {
    display: flex;
    align-self: flex-start;
    overflow: hidden;
    border-radius: 3px;
  }

  .tool {
    position: relative;
    width: 35px;
    height: 34px;
    background: #595959;
  }

  .tool:only-child {
    width: 34px;
  }

  .tool + .tool {
    box-shadow: inset 1px 0 #484848;
  }

  .tool .icon {
    width: 32px;
    height: 32px;
    margin: auto;
  }

  .tool.active {
    background: #87a3d1;
  }

  .tool.yellow {
    background: #d6d78c;
  }

  .tool.outlined {
    border: 1px solid #d6d78c;
  }

  .tool.more::after {
    content: "";
    position: absolute;
    right: 1px;
    bottom: 1px;
    border: 3px solid #151515;
    border-top-color: transparent;
    border-left-color: transparent;
  }

  .toolbar .group:nth-of-type(3),
  .toolbar .group:nth-of-type(6) {
    margin-left: 6px;
  }

  .toolbar .group:nth-of-type(7),
  .toolbar .group:nth-of-type(8) {
    margin-left: 8px;
  }

  .toolbar .group:nth-of-type(8) .tool,
  .toolbar .group:nth-of-type(9) .tool {
    width: 36px;
  }

  /* primitive palette */
  .popup {
    position: absolute;
    z-index: 2;
    top: 18px;
    left: 628px;
    width: 438px;
    padding: 3px 2px 1px;
    border: 1px solid #626262;
    border-radius: 4px;
    background: #3d3d3d;
  }

  .popup .grip {
    margin: 0 4px 1px 9px;
  }

  .primitives {
    display: flex;
  }

  .prim-col {
    width: 108px;
  }

  .prim {
    display: flex;
    align-items: center;
    gap: 5px;
    width: 100%;
    height: 36px;
    text-align: left;
  }

  .prim-icon {
    width: 36px;
    height: 36px;
    padding: 2px;
    background: #5a5a5a;
  }

  .prim-icon .icon {
    width: 32px;
    height: 32px;
  }

  .marker {
    position: absolute;
    z-index: 3;
    fill: none;
    stroke: #fe0000;
    stroke-width: 3;
    stroke-dasharray: 12 6;
    pointer-events: none;
  }

  .popup-marker {
    top: 9px;
    left: 618px;
    width: 456px;
    height: 212px;
  }

  .work {
    display: flex;
    flex: 1;
    min-height: 0;
  }

  .sidebar {
    display: flex;
    flex-direction: column;
    gap: 5px;
    flex: none;
    width: 39px;
    padding-left: 1px;
  }

  .sidebar .grip {
    width: 32px;
    height: 4px;
  }

  .sidebar .group {
    flex-direction: column;
  }

  .sidebar .tool {
    width: 34px;
    height: 35px;
  }

  .sidebar .tool + .tool {
    box-shadow: inset 0 1px #484848;
  }

  .sidebar .group:nth-of-type(3),
  .sidebar .group:nth-of-type(6),
  .sidebar .group:nth-of-type(7),
  .sidebar .group:nth-of-type(8) {
    margin-top: 6px;
  }

  /* viewport */
  .center {
    display: flex;
    flex: 1;
    flex-direction: column;
    min-width: 0;
    padding-right: 4px;
    border-left: 1px solid #2f2f2f;
  }

  .panel-head {
    display: flex;
    align-items: center;
    flex: none;
    gap: 14px;
    height: 24px;
    padding: 0 3px 0 6px;
    border-bottom: 1px solid #505050;
  }

  .view-head {
    border-top: 1px solid #505050;
    border-bottom: 0;
  }

  .burger {
    display: flex;
    flex-direction: column;
    gap: 2px;
    width: 14px;
    margin-right: -4px;
  }

  .burger i {
    height: 2px;
    background: #999;
  }

  .view-head .burger i {
    background: #ddd;
  }

  .head-icons {
    display: flex;
    gap: 5px;
    margin-left: auto;
    color: #888;
  }

  .head-icons .icon {
    width: 15px;
    height: 15px;
  }

  .head-icons .faint {
    color: #595959;
  }

  .viewport {
    position: relative;
    flex: 1;
    min-height: 0;
    border: 1px solid #7e7e7e;
    background: linear-gradient(#4b4b4b, #393939);
  }

  .viewport::before,
  .viewport::after {
    content: "";
    position: absolute;
    top: 0;
    bottom: 0;
    width: 23px;
    background: rgba(0, 0, 0, 0.25);
  }

  .viewport::before {
    left: 0;
  }

  .viewport::after {
    right: 0;
  }

  .scene {
    position: absolute;
    inset: 0;
    width: 100%;
    height: 100%;
  }

  .horizon {
    stroke: #4c4c4c;
  }

  .outline {
    fill: none;
    stroke: #121212;
  }

  .view-name,
  .grid-info {
    position: absolute;
    z-index: 1;
    padding: 0 2px;
    border-radius: 2px;
    background: rgba(40, 40, 40, 0.6);
    color: #dedede;
  }

  .view-name {
    top: 2px;
    left: 2px;
  }

  .grid-info {
    right: 8px;
    bottom: 1px;
  }

  /* timeline */
  .timeline,
  .playback {
    display: flex;
    align-items: center;
    flex: none;
  }

  .timeline {
    gap: 6px;
    height: 31px;
  }

  .timeline .grip,
  .playback .grip {
    height: 18px;
    margin: 0 2px 0 1px;
  }

  .ruler {
    flex: 1;
    min-width: 0;
    height: 27px;
    margin-left: -3px;
    fill: #bcbcbc;
    text-anchor: middle;
  }

  .ruler line {
    stroke: #9a9a9a;
  }

  .ruler .head {
    fill: #87a3d1;
  }

  .ruler .zero {
    fill: #6f9be0;
  }

  .field {
    display: flex;
    align-items: center;
    flex: none;
    width: 75px;
    height: 19px;
    padding-right: 3px;
    border: 1px solid #4e4e4e;
    border-radius: 3px;
    background: #303030;
  }

  .field input {
    flex: 1;
    min-width: 0;
    height: 17px;
    padding: 2px 0 0 4px;
  }

  .spin {
    flex: none;
    width: 7px;
    height: 12px;
    fill: none;
    stroke: #848484;
  }

  .playback {
    height: 31px;
    padding-bottom: 2px;
  }

  .range {
    display: flex;
    align-items: center;
    flex: 1;
    gap: 5px;
    height: 17px;
    margin: 0 7px;
    padding: 0 5px;
    border-radius: 3px;
    background: #595959;
  }

  .range b {
    width: 4px;
    height: 10px;
    border: solid #858585;
    border-width: 0 1px;
  }

  .range-end {
    margin-left: auto;
  }

  .play-tools {
    display: flex;
    gap: 11px;
    margin-left: 11px;
  }

  .play-tools .group:nth-child(6) {
    margin-left: -8px;
  }

  .play-tools .tool {
    width: 28px;
    height: 26px;
  }

  .play-tools .tool:only-child {
    width: 26px;
  }

  .play-tools .icon {
    width: 23px;
    height: 23px;
  }

  /* lower panels */
  .bottom {
    display: flex;
    gap: 4px;
    flex: none;
    height: 139px;
    margin-bottom: 3px;
  }

  .materials,
  .coordinates {
    border: 1px solid #505050;
  }

  .materials {
    flex: 1;
  }

  .materials .panel-head {
    padding-left: 5px;
  }

  .coordinates {
    width: 328px;
  }

  .coord-head {
    gap: 0;
    padding-left: 5px;
  }

  .coord-head span {
    width: 102px;
    padding-top: 2px;
  }

  .coord-head .burger {
    margin-right: 8px;
  }

  .coord-grid {
    display: grid;
    grid-template-columns: 11px 96px 10px 96px 10px minmax(0, 1fr);
    gap: 3px 1px;
    align-items: center;
    padding: 7px 2px 0 1px;
  }

  .coord-grid span {
    text-align: center;
  }

  .coord-grid .field {
    width: auto;
  }

  .coord-grid .dropdown,
  .apply {
    height: 18px;
    margin: 3px 1px 0;
  }

  .apply {
    border-radius: 3px;
    background: #595959;
  }

  .status {
    display: flex;
    align-items: center;
    flex: none;
    height: 24px;
    margin-right: 3px;
    padding-left: 4px;
    border: 1px solid #505050;
  }

  /* right dock */
  .dock {
    display: grid;
    grid-template-rows: 46fr 55fr;
    gap: 4px;
    flex: none;
    width: 516px;
  }

  .dock-row {
    display: flex;
    min-height: 0;
  }

  .dock-panel {
    display: flex;
    flex: 1;
    flex-direction: column;
    border: 1px solid #505050;
    border-right: 0;
  }

  .tree {
    display: flex;
    flex: 1;
    flex-direction: column;
    margin: 0 3px 0 1px;
    border: 1px solid #505050;
    border-left: 0;
  }

  .tree-row {
    display: flex;
    height: 20px;
  }

  .tree-row:nth-child(odd) {
    background: #494949;
  }

  .tree-row.rest {
    flex: 1;
    background: none;
  }

  .tree-name {
    position: relative;
    display: flex;
    align-items: center;
    gap: 5px;
    width: 74px;
    border-right: 1px solid #555;
  }

  .tree-name .icon {
    width: 14px;
    height: 14px;
  }

  .selected {
    color: #f5b83d;
  }

  .branch {
    position: relative;
    width: 13px;
    height: 20px;
    margin-right: -2px;
    background:
      linear-gradient(#808080, #808080) 7px 0 / 1px 20px no-repeat,
      linear-gradient(#808080, #808080) 7px 10px / 6px 1px no-repeat;
  }

  .group-node::after {
    content: "";
    position: absolute;
    top: 6px;
    left: 3px;
    width: 9px;
    height: 9px;
    border: 1px solid #8a8a8a;
    background:
      linear-gradient(#aaa, #aaa) 1px 3px / 5px 1px no-repeat,
      linear-gradient(#aaa, #aaa) 3px 1px / 1px 5px no-repeat,
      #3d3d3d;
  }

  .name-marker {
    top: -1px;
    left: 7px;
    width: 67px;
    height: 26px;
  }

  .tree-state {
    display: flex;
    align-items: center;
    gap: 3px;
    width: 40px;
    padding-left: 3px;
    border-right: 2px solid #555;
  }

  .tree-state .icon {
    width: 10px;
    height: 10px;
  }

  .tree-state .layer {
    width: 12px;
    height: 12px;
  }

  .dots {
    display: flex;
    flex-direction: column;
    gap: 3px;
    padding-left: 2px;
  }

  .dots i {
    width: 5px;
    height: 5px;
    border-radius: 50%;
    background: #8a8a8a;
  }

  .dots.off i {
    background: #e85252;
  }

  .side-tabs {
    display: flex;
    flex-direction: column;
    flex: none;
    width: 23px;
    background: #2f2f2f;
    color: #808080;
  }

  .side-tabs button {
    width: 21px;
    padding: 6px 2px;
    writing-mode: vertical-rl;
    text-align: left;
  }

  .side-tabs .current {
    padding-top: 5px;
    border: 1px solid #505050;
    border-left: 0;
    border-radius: 0 4px 4px 0;
    background: #3d3d3d;
    color: #d0d0d0;
  }

  .attr-head .head-icons {
    gap: 6px;
  }

  .attrs {
    display: flex;
    flex: 1;
    flex-direction: column;
    padding: 4px 6px 3px 3px;
  }

  .attr-title {
    display: flex;
    align-items: center;
    gap: 6px;
    height: 20px;
  }

  .attr-title .icon {
    width: 18px;
    height: 18px;
  }

  .tabs {
    display: flex;
    gap: 1px;
    margin-top: 4px;
  }

  .tabs button {
    width: 58px;
    height: 18px;
    padding-top: 1px;
    background: #595959;
  }

  .tabs button:first-child {
    border-radius: 3px 0 0 3px;
  }

  .tabs button:last-child {
    border-radius: 0 3px 3px 0;
  }

  .tabs .active {
    background: #87a3d1;
    color: #000;
  }

  h2 {
    margin: 8px 0 3px;
    color: #eee;
    font-size: 11px;
    line-height: 16px;
  }

  .effectors {
    display: flex;
    flex: 1;
    align-items: flex-start;
    gap: 2px;
  }

  .effectors label {
    width: 68px;
    padding: 2px 2px 0 0;
    text-align: right;
  }

  .effectors textarea {
    flex: 1;
    align-self: stretch;
    border: 1px solid #505050;
    resize: none;
  }

  .pick {
    color: #a0a0a0;
  }

  .pick .icon {
    width: 18px;
    height: 18px;
  }
</style>
